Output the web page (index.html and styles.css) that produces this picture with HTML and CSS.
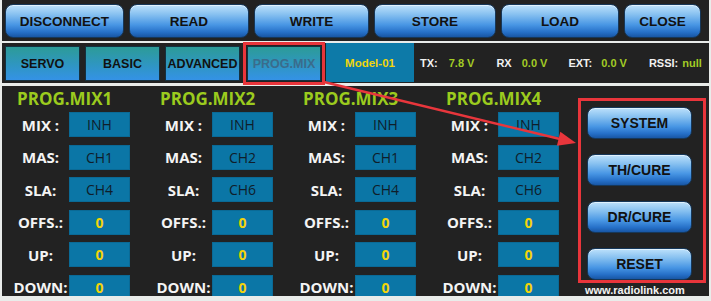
FILE: index.html
```html
<!DOCTYPE html>
<html>
<head>
<meta charset="utf-8">
<link rel="stylesheet" href="styles.css">
</head>
<body>
<div class="app">
  <header class="topbar">
    <button class="btn top w1">DISCONNECT</button>
    <button class="btn top w2">READ</button>
    <button class="btn top w3">WRITE</button>
    <button class="btn top w4">STORE</button>
    <button class="btn top w5">LOAD</button>
    <button class="btn top w6">CLOSE</button>
  </header>
  <nav class="tabbar">
    <div class="tab">SERVO</div>
    <div class="tab">BASIC</div>
    <div class="tab">ADVANCED</div>
    <div class="tab active">PROG.MIX</div>
    <div class="model">Model-01</div>
    <div class="info">
      <span class="k k-tx">TX:</span><span class="v v-tx">7.8 V</span>
      <span class="k k-rx">RX</span><span class="v v-rx">0.0 V</span>
      <span class="k k-ext">EXT:</span><span class="v v-ext">0.0 V</span>
      <span class="k k-rssi">RSSI:</span><span class="v v-rssi">null</span>
    </div>
  </nav>
  <main class="main">
    <section class="mix">
      <h2 class="title">PROG.MIX1</h2>
      <div class="rows">
        <div class="row"><span class="lbl">MIX :</span><span class="val">INH</span></div>
        <div class="row"><span class="lbl">MAS:</span><span class="val">CH1</span></div>
        <div class="row"><span class="lbl">SLA:</span><span class="val">CH4</span></div>
        <div class="row"><span class="lbl">OFFS.:</span><span class="val num">0</span></div>
        <div class="row"><span class="lbl">UP:</span><span class="val num">0</span></div>
        <div class="row"><span class="lbl">DOWN:</span><span class="val num">0</span></div>
      </div>
    </section>
    <section class="mix">
      <h2 class="title">PROG.MIX2</h2>
      <div class="rows">
        <div class="row"><span class="lbl">MIX :</span><span class="val">INH</span></div>
        <div class="row"><span class="lbl">MAS:</span><span class="val">CH2</span></div>
        <div class="row"><span class="lbl">SLA:</span><span class="val">CH6</span></div>
        <div class="row"><span class="lbl">OFFS.:</span><span class="val num">0</span></div>
        <div class="row"><span class="lbl">UP:</span><span class="val num">0</span></div>
        <div class="row"><span class="lbl">DOWN:</span><span class="val num">0</span></div>
      </div>
    </section>
    <section class="mix">
      <h2 class="title">PROG.MIX3</h2>
      <div class="rows">
        <div class="row"><span class="lbl">MIX :</span><span class="val">INH</span></div>
        <div class="row"><span class="lbl">MAS:</span><span class="val">CH1</span></div>
        <div class="row"><span class="lbl">SLA:</span><span class="val">CH4</span></div>
        <div class="row"><span class="lbl">OFFS.:</span><span class="val num">0</span></div>
        <div class="row"><span class="lbl">UP:</span><span class="val num">0</span></div>
        <div class="row"><span class="lbl">DOWN:</span><span class="val num">0</span></div>
      </div>
    </section>
    <section class="mix last">
      <h2 class="title">PROG.MIX4</h2>
      <div class="rows">
        <div class="row"><span class="lbl">MIX :</span><span class="val">INH</span></div>
        <div class="row"><span class="lbl">MAS:</span><span class="val">CH2</span></div>
        <div class="row"><span class="lbl">SLA:</span><span class="val">CH6</span></div>
        <div class="row"><span class="lbl">OFFS.:</span><span class="val num">0</span></div>
        <div class="row"><span class="lbl">UP:</span><span class="val num">0</span></div>
        <div class="row"><span class="lbl">DOWN:</span><span class="val num">0</span></div>
      </div>
    </section>
    <aside class="side">
      <div class="panel">
        <button class="btn side-btn">SYSTEM</button>
        <button class="btn side-btn">TH/CURE</button>
        <button class="btn side-btn">DR/CURE</button>
        <button class="btn side-btn">RESET</button>
      </div>
      <div class="site">www.radiolink.com</div>
    </aside>
  </main>
  <svg class="arrow" width="711" height="301" viewBox="0 0 711 301">
    <line x1="324" y1="82" x2="560" y2="139" stroke="#e8363c" stroke-width="2.5"/>
    <polygon points="576,143 556.9,145.8 560.3,131.8" fill="#e8363c"/>
  </svg>
</div>
</body>
</html>
```

FILE: styles.css
```css
html, body {
  margin: 0;
  padding: 0;
}
body {
  background: #e9ecea;
  width: 711px;
  height: 301px;
  overflow: hidden;
}
.app {
  position: relative;
  padding: 0 2px;
  display: flex;
  flex-direction: column;
  height: 301px;
  box-sizing: border-box;
}

/* top bar */
.topbar {
  height: 41px;
  background: #222;
  display: flex;
  align-items: flex-start;
  padding: 4px 3px 0;
  gap: 5px;
  box-sizing: border-box;
  flex: none;
}
.btn {
  border: 1px solid #163759;
  border-radius: 8px;
  background: linear-gradient(#bde1fb 0%, #86c0f0 30%, #4896e4 62%, #2670c8 85%, #1856a4 100%);
  box-shadow: inset 0 1px 0 rgba(255,255,255,0.55);
  font: bold 13.5px "Liberation Sans", Arial, sans-serif;
  color: #111;
  padding: 0;
  margin: 0;
  box-sizing: border-box;
}
.top { height: 34px; flex: none; }
.w1 { width: 119px; }
.w2 { width: 120px; }
.w3 { width: 115px; }
.w4 { width: 122px; }
.w5 { width: 118px; }
.w6 { width: 77px; }

/* tab bar */
.tabbar {
  margin-top: 2px;
  height: 40px;
  background: #222;
  display: flex;
  align-items: flex-start;
  padding: 0 3px;
  box-sizing: border-box;
  flex: none;
}
.tab {
  width: 75px;
  height: 35px;
  margin-top: 3px;
  margin-right: 5px;
  box-sizing: border-box;
  border: 1px solid #15303f;
  background: linear-gradient(#2c9b97 0%, #2f96c2 55%, #3492e6 100%);
  display: flex;
  align-items: center;
  justify-content: center;
  font: bold 12.5px "Liberation Sans", Arial, sans-serif;
  color: #111;
}
.tab.active {
  width: 74px;
  margin-left: 2px;
  color: #3a6c8c;
  outline: 3px solid #e9353b;
  outline-offset: 1px;
}
.model {
  width: 88px;
  height: 39px;
  background: #0d7aa8;
  display: flex;
  align-items: center;
  justify-content: center;
  font: bold 11.5px "Liberation Sans", Arial, sans-serif;
  color: #f2d60c;
}
.info {
  display: flex;
  align-items: center;
  height: 40px;
  padding-left: 6px;
  font: bold 11px "Liberation Sans", Arial, sans-serif;
  white-space: pre;
}
.k { color: #f1f1f1; }
.v { color: #a3cc25; }
.v-tx { margin-left: 11px; }
.k-rx { margin-left: 22px; }
.v-rx { margin-left: 10px; }
.k-ext { margin-left: 21px; }
.v-ext { margin-left: 9px; }
.k-rssi { margin-left: 22px; }
.v-rssi { margin-left: 4px; }

/* main */
.main {
  margin-top: 3px;
  height: 210px;
  background: #222;
  display: flex;
  padding: 0 3px 0 10px;
  overflow: hidden;
  box-sizing: border-box;
  flex: none;
}
.mix {
  width: 143px;
  flex: none;
  padding-top: 3px;
  box-sizing: border-box;
}
.mix.last { width: 137px; }
.title {
  margin: 0 0 3px 5px;
  font: bold 17px/20px "Open Sans", sans-serif;
  color: #9bcb1e;
  white-space: nowrap;
}
.rows {
  display: flex;
  flex-direction: column;
  gap: 7.5px;
}
.row {
  display: flex;
  align-items: center;
  height: 25px;
}
.lbl {
  width: 57px;
  flex: none;
  text-align: center;
  font: bold 15px "Open Sans", sans-serif;
  color: #f4f4f4;
  white-space: nowrap;
}
.val {
  width: 61px;
  height: 25px;
  flex: none;
  background: #0b76a6;
  box-sizing: border-box;
  border: 1px solid #0a6a96;
  display: flex;
  align-items: center;
  justify-content: center;
  font: 14px "Open Sans", sans-serif;
  color: #0f1d2a;
}
.val.num {
  color: #f4d40a;
  font-weight: bold;
}

/* side panel */
.side {
  width: 128px;
  flex: none;
  padding-top: 12px;
  display: flex;
  flex-direction: column;
}
.panel {
  width: 128px;
  height: 185px;
  box-sizing: border-box;
  border: 3px solid #e9353b;
  display: flex;
  flex-direction: column;
  align-items: center;
  padding: 6px 5px 0 0;
  gap: 15px;
  flex: none;
}
.side-btn {
  width: 105px;
  height: 32px;
  flex: none;
  font-size: 14px;
}
.site {
  margin: 2px 0 0 7px;
  font: bold 11px/11px "Liberation Sans", Arial, sans-serif;
  color: #f2f2f2;
  white-space: nowrap;
}

/* annotation arrow */
.arrow {
  position: absolute;
  left: 0;
  top: 0;
  pointer-events: none;
}
```
